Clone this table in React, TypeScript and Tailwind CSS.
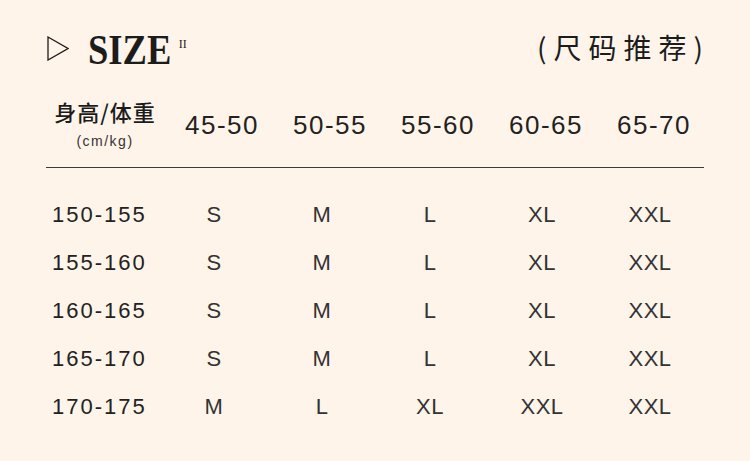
const cols = ['45-50', '50-55', '55-60', '60-65', '65-70']

const rows: Array<{ h: string; sizes: string[] }> = [
  { h: '150-155', sizes: ['S', 'M', 'L', 'XL', 'XXL'] },
  { h: '155-160', sizes: ['S', 'M', 'L', 'XL', 'XXL'] },
  { h: '160-165', sizes: ['S', 'M', 'L', 'XL', 'XXL'] },
  { h: '165-170', sizes: ['S', 'M', 'L', 'XL', 'XXL'] },
  { h: '170-175', sizes: ['M', 'L', 'XL', 'XXL', 'XXL'] },
]

const sans = "font-['Liberation_Sans','Noto_Sans_CJK_SC',sans-serif]"
const cjk = "font-['Noto_Sans_CJK_SC',sans-serif]"

export default function App() {
  return (
    <div className="w-[750px] h-[461px] bg-[#fef4e9] text-[#1c1c1c] px-[46px] pt-[30px] overflow-hidden">
      {/* title */}
      <div className="flex items-center justify-between h-[36px]">
        <div className="flex items-center">
          <svg width="22" height="25" viewBox="0 0 22 25" className="ml-[1px]">
            <path d="M1 1 L21 12.5 L1 24 Z" fill="none" stroke="#1c1c1c" strokeWidth="1.3" />
          </svg>
          <span className="ml-[19px] mt-[3px] font-['Liberation_Serif',serif] font-bold text-[42px] leading-none scale-x-[0.87] origin-left">
            SIZE
          </span>
          <span className="-ml-[5px] -mt-[8px] font-['Liberation_Serif',serif] text-[12px] leading-none text-[#1c1c1c]">II</span>
        </div>
        <div className={`${cjk} text-[28px] leading-none tracking-[7px] -mr-[6px] -mt-[2px]`}>(尺码推荐)</div>
      </div>

      {/* header */}
      <div className="grid grid-cols-[114px_repeat(5,108px)] items-center h-[64px] mt-[30px]">
        <div className="flex flex-col items-center pl-[4px] mb-[8px]">
          <span className={`${cjk} text-[22px] leading-none tracking-[1px] font-medium`}>身高/体重</span>
          <span className={`${sans} text-[14px] leading-none tracking-[1.5px] mt-[12px] text-[#333]`}>(cm/kg)</span>
        </div>
        {cols.map(c => (
          <div key={c} className={`${sans} text-[26px] leading-none tracking-[1.5px] text-center pl-4 mb-[6px] text-[#222]`}>
            {c}
          </div>
        ))}
      </div>
      <div className="mt-[7px] border-b border-[#3a3a3a] w-[658px]" />

      {/* rows */}
      <div className="mt-[23px] flex flex-col">
        {rows.map(r => (
          <div key={r.h} className="grid grid-cols-[114px_108px_108px_108px_116px_100px] items-center h-[48px]">
            <div className={`${sans} text-[22px] leading-none tracking-[2px] pl-[6px] text-[#222]`}>{r.h}</div>
            {r.sizes.map((s, i) => (
              <div key={i} className={`${sans} text-[22px] leading-none tracking-[0.5px] text-center text-[#333]`}>
                {s}
              </div>
            ))}
          </div>
        ))}
      </div>
    </div>
  )
}
